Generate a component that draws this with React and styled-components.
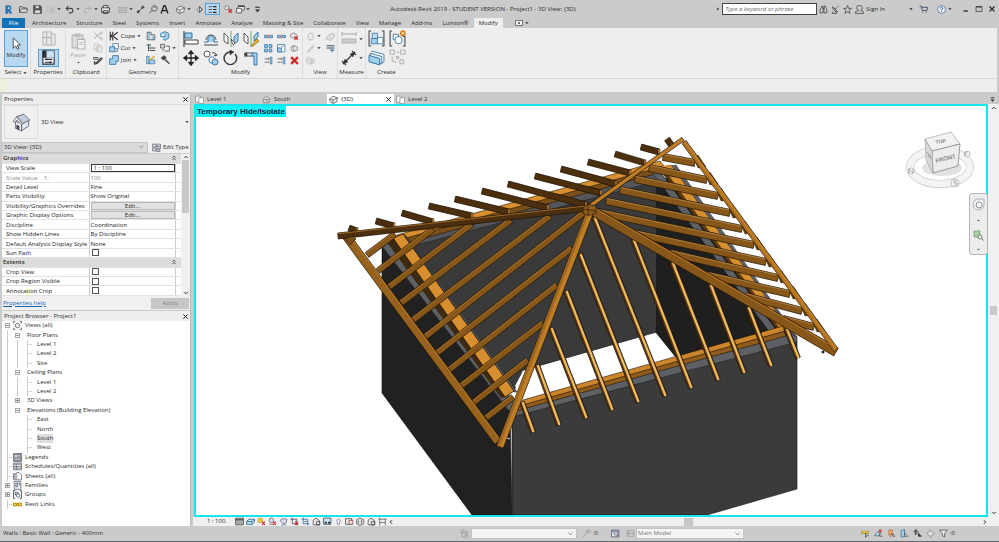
import { Fragment } from 'react';
import styled, { createGlobalStyle } from 'styled-components';

const GlobalStyle = createGlobalStyle`
  * {
    box-sizing: border-box;
  }

  body {
    margin: 0;
    background: #cbcbcb;
  }

  body, button, input, select, table {
    font-family: "Open Sans", "Noto Sans", sans-serif;
    font-size: 6px;
    line-height: 9px;
    color: #2b2b2b;
  }
`;

// ---------- icons ----------

const D = '#444';
const B = '#2f6f9f';
const L = '#9fd0ee';
const G = '#b4b4b4';
const R = '#d02828';
const O = '#e0a020';

// every entry is [path, stroke, fill, stroke width] on a 16x16 grid
const glyphs = {
  revit: [['M3 1h6a4.500 4.500 0 0 1 2 8l3 6h-4l-3-5.500V15H3z', '#1c62a8', '#2474bd', 0.6], ['M7 4v3h2a1.500 1.500 0 0 0 0-3z', '#fff', '#cbcbcb', 0.3]],
  open: [['M1 13V3h5l1 2h6v2M1 13l3-6h12l-3 6z', D, '#ddd', 1.4]],
  save: [['M1 1h12l2 2v12H1z', '#333', '#555', 1], ['M4 1h7v5H4zM3 9h10v6H3z', '#444', '#ddd', 1]],
  sync: [['M2 4l6-3 6 3v6l-6 4-6-4zM2 4l6 3 6-3M8 7v7', G, '#ccc', 1.2], ['M9 11a3 3 0 1 1 1 3', G, 'none', 1.4]],
  undo: [['M6 2L2 6l4 4M2 6h8a4 4 0 0 1 0 8H7', D, 'none', 1.8]],
  redo: [['M10 2l4 4-4 4M14 6H6a4 4 0 0 0 0 8h3', G, 'none', 1.8]],
  print: [['M4 5V1h8v4M1 5h14v8H1zM4 10h8v5H4z', '#333', '#eee', 1.5]],
  ruler: [['M1 4v3M15 4v3M1 5h14M1 9h14v4H1z', '#999', 'none', 1.4]],
  dim: [['M2 14L14 2M1 11l4 4M11 1l4 4', '#333', 'none', 1.2], ['M2 14l2-5 3 3zM14 2l-2 5-3-3z', '#333', '#333', 0.4]],
  tag: [['M1 15L6 9M5 4a5 5 0 1 1 4 7l-4-2zM8 4h4', D, 'none', 1.3]],
  textA: [['M2 15L7 1h2l5 14M4 10h8', '#222', 'none', 2.4]],
  house: [['M1 7l6-5 8 3-1 7-7 3-5-3z', D, '#eee', 1.2], ['M1 7l6 2 8-4M7 9v6', D, 'none', 1.2]],
  section: [['M4 8l4-5 5 5-5 5zM8 3v10l5-5z', D, '#eee', 1.2]],
  thin: [['M1 3h6M1 8h6M1 13h6', '#222', 'none', 1.2], ['M9 3h6M9 13h6', '#222', 'none', 2.4], ['M9 8h6', '#222', 'none', 1.8]],
  closeHidden: [['M2 2h6v6H2zM8 7h5', '#777', '#eee', 1.3], ['M8 8l6 6M14 8l-6 6', R, 'none', 2.2]],
  switchWin: [['M4 1h11v8H4z', D, '#eee', 1.3], ['M4 2.500h11', D, 'none', 2], ['M1 6h9v8H1z', D, '#eee', 1.3]],
  customise: [['M4 4h8', '#333', 'none', 2], ['M4 8h8l-4 5z', '#333', '#333', 0.5]],
  binoculars: [['M2 14V9l3-7h2v12zM14 14V9l-3-7H9v12zM7 6h2', '#333', '#ddd', 1.4]],
  satellite: [['M3 3c0 5 3 9 9 9zM7 8l4-4M3 12l-1 3h8l-2-3M12 1l2 2', '#333', 'none', 1.3]],
  star: [['M8 1l2 5h5l-4 3.500 1.500 5.500L8 12l-4.500 3L5 9.500 1 6h5z', '#333', 'none', 1.2]],
  user: [['M8 1a4 4 0 0 1 2 8v1l5 2v3H1v-3l5-2V9a4 4 0 0 1 2-8z', '#333', 'none', 1.2]],
  cart: [['M1 2h3l2 8h8l1-6H4', '#2d3763', 'none', 1.4], ['M6 13h1M12 13h1', '#2d3763', 'none', 2]],
  help: [['M8 1a7 7 0 1 1 0 14A7 7 0 0 1 8 1z', '#2d5e8a', '#eef4fa', 1.2], ['M6 6a2 2 0 1 1 2.500 2L8 9.500M8 11v1.500', '#2456a0', 'none', 1.6]],
  minimise: [['M3 12h9', '#222', 'none', 2.4]],
  maximise: [['M2 3h12v10H2z', '#333', 'none', 1.4], ['M2 4h12', '#333', 'none', 2]],
  close: [['M3 3l10 10M13 3L3 13', '#222', 'none', 2.2]],
  camera: [['M1 3h14v10H1z', D, '#f5f5f5', 1.4], ['M6 8h4', D, 'none', 3]],
  cursor: [['M4 1l9 9H9l2 4-2 1-2-4-3 3z', '#333', '#fff', 1]],
  family: [['M2 1h9v6H2zM2 7h9v8H2zM11 3h4v12h-4M6 1v14', G, '#e6e6e6', 1]],
  properties: [['M2 1h12v14H2z', '#263238', '#fff', 1.2], ['M2 1h4v7H2z', '#222', '#333', 0.6], ['M6 1h8v7H6z', '#78a', '#cfe4f4', 0.6], ['M4 10h8M4 13h8M6 9v2M10 12v2', '#222', 'none', 1.2]],
  paste: [['M2 2h10v12H2z', G, '#dcdcdc', 1], ['M5 1h4v2H5z', G, '#ccc', 1], ['M7 6h7v9H7z', G, '#f2f2f2', 1], ['M8.500 9h4M8.500 11h4', G, 'none', 0.8]],
  scissors: [['M2 3l10 9M2 12l10-9', '#aaa', 'none', 1.6], ['M12 11a2 2 0 1 1 0 3zM12 2a2 2 0 1 1 0 3z', '#aaa', 'none', 1]],
  copyDoc: [['M2 2h7v9H2zM6 5h8v9H6z', G, '#eee', 1.1]],
  brush: [['M1 4h7v3H1z', '#333', '#eee', 1.2], ['M4 13l9-9 2 2-8 8z', '#222', '#555', 1], ['M2 10l4 4-4 1z', '#222', '#777', 1]],
  cope: [['M2 1v14M6 1v4l-3 3 3 3v4M14 2L6 8l8 6', '#333', 'none', 1.8]],
  cut: [['M6 1h9v8H9V6H6z', B, '#fff', 1.2], ['M1 6h8v8H1z', B, L, 1.2], ['M10 14a4 4 0 0 0 4-4', D, 'none', 1.2]],
  join: [['M6 1h9v9h-4v5H1V6h5z', B, L, 1.3]],
  wallA: [['M2 2h6v4h6v8H2z', D, '#dfeaf2', 1.2], ['M5 2v12M9 8l4 3-4 3', B, 'none', 1]],
  wallB: [['M1 4l7-3 6 3v7l-6 4-3-2M1 4v5h7V5', B, L, 1.3]],
  beam: [['M1 3h7M4 3v10M6 8h9M6 12h9', '#333', 'none', 1.4], ['M8 5l-3 3 3 2', B, L, 1]],
  splitFace: [['M1 2h6v6H1z', D, '#ddd', 1.2], ['M9 5h6v8H7', D, '#eee', 1.2], ['M4 11h2', D, 'none', 2]],
  paint: [['M1 2h4v12H1zM5 8h9v6H5z', B, L, 1], ['M5 9l9-7', O, 'none', 2.4]],
  hammer: [['M2 5l4-4 4 3-4 4z', '#222', '#444', 1], ['M8 7l7 7', '#555', 'none', 2.4]],
  align: [['M1 0v16', D, 'none', 1.2], ['M2 2h7v5H2z', B, L, 1], ['M2 9h13v4H2z', D, '#fff', 1]],
  offset: [['M1 11h4V9a3.200 3.200 0 1 1 6 0v2h4', B, L, 1], ['M1 14h14', D, 'none', 1], ['M3 9a5 5 0 1 1 10 0', D, 'none', 0.9]],
  mirrorAxis: [['M1 2l4 4v7l-4-3z', D, '#fff', 0.9], ['M8 0v16', '#3d9a4a', 'none', 0.8], ['M15 2l-4 4v7l4-3z', B, L, 0.9], ['M8 8l4 4-2 2z', '#333', '#fff', 0.7]],
  mirrorDraw: [['M1 2l4 4v7l-4-3z', D, '#fff', 0.9], ['M8 0v16', '#3d9a4a', 'none', 0.8], ['M15 1l-4 4v5l4-4z', B, L, 0.9], ['M8 15l6-7 2 2-6 5z', '#8a6a10', '#f0c030', 0.8]],
  move: [['M8 1v14M1 8h14', '#222', 'none', 1.3], ['M8 0l3 4H5zM8 16l3-4H5zM0 8l4-3v6zM16 8l-4-3v6z', '#222', '#222', 0.3]],
  copy: [['M4 1a3 3 0 1 1 0 6a3 3 0 0 1 0-6z', D, '#fff', 0.9], ['M8 7a3.200 3.200 0 1 1 0 6a3.200 3.200 0 0 1 0-6z', B, '#fff', 0.9], ['M12 9a3 3 0 1 1 0 6a3 3 0 0 1 0-6z', B, L, 0.9], ['M9 3c3-1 4 0 4 3l-2-1M13 6l1-2', '#333', 'none', 0.9]],
  rotate: [['M12 4a6.300 6.300 0 1 1-4-2', '#333', 'none', 1.4], ['M7 0l4 2-4 3z', '#333', '#333', 0.5]],
  trim: [['M1 3h10M1 6h9', D, 'none', 0.9], ['M9 3h5v12h-3V6H9z', B, L, 0.9], ['M1 4.500l3-2v4z', '#333', '#333', 0.4]],
  split: [['M1 6h5v4H1zM10 6h5v4h-5z', B, L, 1.4], ['M8 4v8', '#c44', 'none', 1]],
  array: [['M1 1h5v5H1zM9 1h5v5H9zM1 9h5v5H1zM9 9h5v5H9z', B, L, 1.4]],
  scale: [['M1 1h13v13H1z', B, '#fff', 1.3], ['M1 7h7v7H1z', B, L, 1.3], ['M8 6l4-3', D, 'none', 1.3]],
  extend: [['M1 5h8M1 11h8M7 3l2 2-2 2', D, 'none', 1.2], ['M11 2h3v12h-3z', B, L, 1.2]],
  pin: [['M2 5h3V3h4v2h4v6H9v2H5v-2H2zM6 4v8', '#777', '#eee', 1.2]],
  unpin: [['M1 4h3V2h4v2h4v5H8v2H4V9H1z', '#777', '#eee', 1.2], ['M8 8l6 6M14 8l-6 6', R, 'none', 2.2]],
  remove: [['M2 2l12 12M14 2L2 14', R, 'none', 4]],
  bulb: [['M5 11a5 5 0 1 1 6 0v3H5z', G, '#e8e8e8', 1.4]],
  pencil: [['M2 14l10-11 2 2L5 14z', G, '#ddd', 1.4]],
  eraser: [['M1 9l8-7 6 2v5l-7 6-7-2z', G, '#ddd', 1.3]],
  lineStyle: [['M1 3h14M1 7h14', '#3a4a5a', 'none', 2], ['M7 11h8M11 9v6', B, 'none', 1.6]],
  linework: [['M1 4l5-2 4 3v8l-5 2-4-4zM6 8l8-3v7l-5 2', G, '#e0e0e0', 1.2]],
  measure: [['M1 1v4M15 1v4M1 3h14', '#aaa', 'none', 1], ['M1 8h14v4H1z', '#b4b4b4', '#ccc', 1]],
  assembly: [['M3 1H1v14h2M13 1h2v14h-2', D, 'none', 1], ['M4 3h5v5H4z', B, '#b8dcf2', 0.7], ['M3 8h6v5H3z', B, L, 0.7], ['M9 7h5v6H9z', B, '#fff', 0.7]],
  group: [['M3 1H1v14h2M13 6h2v9h-2', D, 'none', 1], ['M4 4h5v5H4z', B, '#fff', 0.8], ['M9 6a3.500 3.500 0 1 1 0 7a3.500 3.500 0 0 1 0-7z', B, '#fff', 0.8], ['M13 1a2 2 0 1 1 0 4a2 2 0 0 1 0-4z', '#e07818', '#fbe0b8', 1.4]],
  parts: [['M3 2l12 3v7l-2 1', B, '#fff', 0.8], ['M2 4l11 3v7L2 11z', B, '#e6f2fa', 0.8], ['M1 6l10 3v6L1 12z', B, L, 0.9]],
  similar: [['M1 1h4v4H1zM11 1h4v4h-4zM7 3h3M3 7v4l4 2', G, 'none', 1], ['M7 7h2v2H7zM12 10a2 2 0 1 1 0 4a2 2 0 0 1 0-4z', G, 'none', 1]],
  homeBig: [['M3 7l5 2v6l-5-2z', '#445', '#f8fafb', 0.6], ['M8 9l6-3v5l-6 4z', '#445', '#dfe5ec', 0.6], ['M1 7l3-4 5 6-1 1-4-4-2 2z', '#445', '#eef2f6', 0.6], ['M4 3l6-2 5 5-6 3z', '#445', '#c2cedc', 0.6], ['M4 10l2 1v3l-2-1z', '#334', '#445', 0.4]],
  editType: [['M1 2h6v5H1zM1 9h6v5H1zM9 2h6v8H9z', '#556', '#dde6f0', 1.2], ['M8 6h7M8 12h6v3H8z', '#556', 'none', 1.2]],
  plan: [['M1 2h9v11H1z', '#888', '#f4f4f4', 1.2], ['M7 5h8v10H7z', '#888', '#fff', 1.2]],
  elevation: [['M1 8l7-6 7 6M3 8h10v6H3zM7 10h2v4', '#777', '#ddd', 1.3]],
  views: [['M1 4V1h3M12 1h3v3M15 12v3h-3M4 15H1v-3', D, 'none', 1.4], ['M8 4a4 4 0 1 1 0 8a4 4 0 0 1 0-8z', D, '#eee', 1.2]],
  legend: [['M1 1h14v14H1z', '#4a5058', '#8a929c', 1.2], ['M3 4h4v3H3zM9 5h4M3 11h10', '#fff', 'none', 1]],
  schedule: [['M1 2h14v12H1z', '#4a5058', '#dfe5ec', 1.2], ['M1 4h14M1 8h14M1 11h14M6 4v10', '#4a5058', 'none', 1]],
  sheet: [['M1 3h11v11H1z', '#4a5058', '#dfe5ec', 1.2], ['M6 1h5l4 4v9h-4', '#4a5058', '#fff', 1.2], ['M1 5h6M1 8h6M1 11h6', '#4a5058', 'none', 1]],
  families: [['M2 1h12v14H2z', '#556', '#e8edf2', 1.2], ['M5 4h3v6H5zM10 4h2v4', '#345', 'none', 1.2]],
  groups: [['M4 1H1v14h3M12 1h3v14h-3', '#345', 'none', 1.5], ['M4 4h5v5H4z', '#345', '#c8d8e8', 1.2], ['M9 7a3 3 0 1 1 0 6a3 3 0 0 1 0-6z', '#345', '#fff', 1.2]],
  link: [['M1 6h6v4H1zM9 6h6v4H9zM5 8h6', '#c79a12', '#f4dc7a', 2.2]],
  detail: [['M1 2h14v12H1z', '#555', '#aaa', 1.4], ['M1 5h14', '#333', 'none', 1.6]],
  visual: [['M1 8l4-4h10l-4 4zM1 8v5h10V8M11 13l4-4V4', B, '#bfe0f0', 1.5]],
  sun: [['M6 2a4 4 0 1 1 0 8a4 4 0 0 1 0-8z', '#b8860b', '#f8cc40', 1.2], ['M9 8l5 6M14 8l-5 6', R, 'none', 2]],
  shadow: [['M6 2a4 4 0 1 1 0 8a4 4 0 0 1 0-8zM2 13h7', '#567', '#dde', 1.3], ['M9 8l5 6M14 8l-5 6', R, 'none', 2]],
  render: [['M2 6l4-3 8 1-1 6-6 2zM4 14h9', '#567', '#dde', 1.3]],
  crop: [['M4 1v11h11M1 4h11v11', '#446', 'none', 1.4], ['M9 8l5 6M14 8l-5 6', R, 'none', 2]],
  cropShow: [['M4 1v11h11M1 4h11v11M6 8h5', B, '#dde', 1.4]],
  lock: [['M2 6l5-4 6 4v8H2zM8 8h6v6H8z', '#444', '#e8e8e8', 1.3]],
  glasses: [['M1 2h13v11H1z', '#346', '#cfe6f6', 1.4], ['M3 10h4M9 10h4', '#222', 'none', 3]],
  smallBulb: [['M6 9a3 3 0 1 1 4 0v4H6z', '#568', '#eef', 1]],
  worksharing: [['M1 3h11v10H1z', '#444', '#eee', 1.4], ['M7 6h7v7H7z', '#833', '#f4dede', 1.2]],
  analytic: [['M1 12V5l6-3 7 3v7l-7 3zM4 6v6M10 5v7', '#555', '#ddd', 1.3]],
  constraint: [['M3 1v14M13 3v12M1 4h14M3 10h10', '#555', 'none', 1.3]],
  workset: [['M2 2h5v4H2zM9 5h5v3H9zM4 6v8h4M9 11h5v4H9z', '#888', '#ddd', 1.2]],
  edit: [['M2 14L12 2M9 2h5v4H8z', '#999', '#ddd', 1.5]],
  option: [['M1 2h13v12H1z', '#446', '#e4ecf4', 1.3], ['M1 4h13M4 7h3v5M9 7h3v5H9', '#446', 'none', 1.3]],
  optionB: [['M2 3h12v10H2zM5 3v10M2 8h12', '#999', '#ccc', 1.2]],
  selLink: [['M1 4h12v4H1z', '#9a7a10', '#f0d040', 1], ['M8 7l5 5H9l-1 3z', '#222', '#fff', 1]],
  selUnder: [['M1 12l5-7h6l-3 7z', '#457', '#cde', 1.2], ['M9 1l5 5M14 1L9 6', R, 'none', 1.8], ['M9 8l5 5h-4z', '#222', '#fff', 1]],
  selPin: [['M3 2h7l-1 4 3 4H2l2-4zM6 10v5', '#b06020', '#f0b080', 1.2], ['M9 8l5 5h-4z', '#222', '#fff', 1]],
  selFace: [['M2 3l6-2v13H2z', B, L, 1.3], ['M8 7l6 6h-5z', '#222', '#fff', 1]],
  dragSel: [['M5 1v9M1 5h9M3 3l2-2 2 2M3 8l2 2 2-2', '#222', 'none', 1.4], ['M9 7l6 6h-5z', '#222', '#333', 1]],
  gear: [['M8 3a5 5 0 1 1 0 10A5 5 0 0 1 8 3zM8 1v2M8 13v2M1 8h2M13 8h2', '#999', '#ddd', 1.6]],
  filter: [['M1 2h14l-5 6v6l-4-2V8z', '#444', '#eee', 1.3]],
  arrowUp: [['M3 11l5-5 5 5', '#333', 'none', 2.6]],
  arrowDown: [['M3 5l5 5 5-5', '#333', 'none', 2.6]],
  arrowLeft: [['M11 3L6 8l5 5', '#333', 'none', 2.6]],
  arrowRight: [['M5 3l5 5-5 5', '#333', 'none', 2.6]],
  fold: [['M4 7l4-4 4 4M4 13l4-4 4 4', '#222', 'none', 2]],
  caret: [['M2 5h12l-6 7z', '#333', '#333', 0.5]],
  caretRight: [['M5 2v12l7-6z', '#333', '#333', 0.5]],
};

const Svg = styled.svg`
  display: block;
  flex: none;
  width: ${({ $size }) => $size}px;
  height: ${({ $size }) => $size}px;
`;

const Icon = ({ name, size = 10 }) => (
  <Svg viewBox="0 0 16 16" $size={size} aria-hidden="true">
    {glyphs[name].map(([d, stroke, fill, width]) => (
      <path key={d} d={d} stroke={stroke} fill={fill} strokeWidth={width} />
    ))}
  </Svg>
);

const IconButton = styled.button`
  display: flex;
  flex: none;
  align-items: center;
  justify-content: center;
  gap: 2px;
  width: ${({ $w }) => ($w ? `${$w}px` : 'auto')};
  height: ${({ $h }) => $h || 12}px;
  margin: 0;
  margin-left: ${({ $gap }) => $gap || 0}px;
  padding: 0;
  border: 1px solid ${({ $on }) => ($on ? '#5c9fd4' : 'transparent')};
  background: ${({ $on }) => ($on ? '#b8d8f0' : 'transparent')};
  color: ${({ $muted }) => ($muted ? '#a8a8a8' : '#2b2b2b')};
`;

const Page = styled.div`
  display: flex;
  flex-direction: column;
  height: 100vh;
  min-height: 520px;
  overflow: hidden;
`;

// ---------- title bar ----------

const TitleBar = styled.header`
  display: grid;
  grid-template-columns: 39% auto 1fr;
  align-items: center;
  height: 18px;
  padding: 0 3px;
`;

const BarGroup = styled.div`
  display: flex;
  align-items: center;
  justify-content: ${({ $end }) => ($end ? 'flex-end' : 'flex-start')};
`;

const AppTitle = styled.div`
  white-space: nowrap;
`;

const SearchBox = styled.input`
  width: 95px;
  height: 12px;
  margin: 0 1px 0 2px;
  padding: 0 2px;
  border: 1px solid #444;
  border-radius: 0;
  background: #fff;

  &::placeholder {
    color: #666;
    font-style: italic;
  }
`;

const quickAccess = [
  ['revit', 'Revit', 11, 0],
  ['open', 'Open', 11, 4],
  ['save', 'Save', 10, 3],
  ['sync', 'Synchronize', 10, 3],
  ['caret', 'Synchronize options', 6, 1],
  ['undo', 'Undo', 10, 2],
  ['caret', 'Undo list', 6, 1],
  ['redo', 'Redo', 10, 1],
  ['caret', 'Redo list', 6, 1],
  ['print', 'Print', 11, 1],
  ['ruler', 'Measure', 10, 6],
  ['caret', 'Measure options', 6, 1],
  ['dim', 'Aligned Dimension', 11, 1],
  ['tag', 'Tag by Category', 10, 2],
  ['textA', 'Text', 9, 2],
  ['house', 'Default 3D View', 10, 6],
  ['caret', '3D View options', 6, 1],
  ['section', 'Section', 10, 2],
  ['thin', 'Thin Lines', 15, 1],
  ['closeHidden', 'Close Hidden Windows', 10, 3],
  ['switchWin', 'Switch Windows', 10, 2],
  ['caret', 'Windows list', 6, 0],
  ['customise', 'Customize Quick Access Toolbar', 8, 2],
];

const Header = () => (
  <TitleBar>
    <BarGroup>
      {quickAccess.map(([name, label, w, gap]) => (
        <IconButton key={label} aria-label={label} $w={w} $gap={gap} $on={name === 'thin'}>
          <Icon name={name} size={name === 'caret' ? 4 : 9} />
        </IconButton>
      ))}
    </BarGroup>
    <AppTitle>Autodesk Revit 2019 - STUDENT VERSION - Project1 - 3D View: {'{3D}'}</AppTitle>
    <BarGroup $end>
      <Icon name="caretRight" size={4} />
      <SearchBox aria-label="Search" placeholder="Type a keyword or phrase" />
      <IconButton aria-label="Find" $w={10}><Icon name="binoculars" size={9} /></IconButton>
      <IconButton aria-label="Communication" $w={10} $gap={2}><Icon name="satellite" size={9} /></IconButton>
      <IconButton aria-label="Favorites" $w={10} $gap={2}><Icon name="star" size={9} /></IconButton>
      <IconButton $gap={2}><Icon name="user" size={9} />Sign In</IconButton>
      <IconButton aria-label="Account" $w={6} $gap={22}><Icon name="caret" size={4} /></IconButton>
      <IconButton aria-label="Store" $w={10} $gap={4}><Icon name="cart" size={9} /></IconButton>
      <IconButton aria-label="Help" $w={10} $gap={8}><Icon name="help" size={9} /></IconButton>
      <IconButton aria-label="Help options" $w={6} $gap={1}><Icon name="caret" size={4} /></IconButton>
      <IconButton aria-label="Minimize" $w={9} $gap={8}><Icon name="minimise" size={8} /></IconButton>
      <IconButton aria-label="Maximize" $w={9} $gap={4}><Icon name="maximise" size={8} /></IconButton>
      <IconButton aria-label="Close" $w={9} $gap={4}><Icon name="close" size={8} /></IconButton>
    </BarGroup>
  </TitleBar>
);

const Tabs = styled.nav`
  display: flex;
  align-items: stretch;
  height: 10px;
  padding-left: 2px;
`;

const Tab = styled.button`
  padding: 0 5px;
  border: 0;
  line-height: 10px;
  white-space: nowrap;
  background: ${({ $kind }) => ({ file: '#1071b8', active: '#eee' })[$kind] || 'transparent'};
  color: ${({ $kind }) => ($kind === 'file' ? '#fff' : '#2b2b2b')};
  ${({ $kind }) => $kind === 'file' && 'width: 23px; margin-right: 2px;'}
`;

const tabNames = ['File', 'Architecture', 'Structure', 'Steel', 'Systems', 'Insert', 'Annotate', 'Analyze', 'Massing & Site', 'Collaborate', 'View', 'Manage', 'Add-Ins', 'Lumion®', 'Modify'];

const RibbonTabs = () => (
  <Tabs>
    {tabNames.map((name) => (
      <Tab key={name} $kind={{ File: 'file', Modify: 'active' }[name]}>{name}</Tab>
    ))}
    <IconButton aria-label="Ribbon display" $gap={11} $h={10}>
      <Icon name="camera" size={8} />
      <Icon name="caret" size={4} />
    </IconButton>
  </Tabs>
);

// ---------- ribbon ----------

const Ribbon = styled.section`
  display: flex;
  height: 51px;
  margin-right: 2px;
  padding-left: 2px;
  border-bottom: 1px solid #d4d4d4;
  background: #eee;
`;

const PanelBox = styled.div`
  display: flex;
  flex-direction: column;
  width: ${({ $w }) => $w}px;
  border-right: 1px solid ${({ $last }) => ($last ? 'transparent' : '#dcdcdc')};
`;

const PanelBody = styled.div`
  display: flex;
  flex: 1;
  align-items: center;
  justify-content: center;
  gap: ${({ $gap }) => $gap || 0}px;
  padding-top: 1px;
`;

const PanelTitle = styled.div`
  display: flex;
  align-items: center;
  justify-content: center;
  gap: 2px;
  height: 11px;
  white-space: nowrap;
`;

const Stack = styled.div`
  display: flex;
  flex-direction: column;
  align-items: ${({ $start }) => ($start ? 'flex-start' : 'center')};
  gap: ${({ $gap }) => $gap || 0}px;
`;

const LargeButton = styled(IconButton)`
  flex-direction: column;
  gap: 1px;
  width: ${({ $w }) => $w || 22}px;
  height: 37px;
`;

const IconGrid = styled.div`
  display: grid;
  grid-template-columns: repeat(${({ $cols }) => $cols}, auto);
  gap: ${({ $gap }) => $gap};
  justify-items: start;
`;

const Panel = ({ title, width, gap, menu, last, children }) => (
  <PanelBox $w={width} $last={last}>
    <PanelBody $gap={gap}>{children}</PanelBody>
    <PanelTitle>
      {title}
      {menu && <Icon name="caret" size={4} />}
    </PanelTitle>
  </PanelBox>
);

const Tools = ({ cols, gap, size, height, names }) => (
  <IconGrid $cols={cols} $gap={gap}>
    {names.map((name) => {
      const [icon, menu] = name.split('+');
      return (
        <IconButton key={name} aria-label={icon} $h={height || 12}>
          <Icon name={icon} size={size} />
          {menu !== undefined && <Icon name="caret" size={4} />}
        </IconButton>
      );
    })}
  </IconGrid>
);

const RibbonBar = () => (
  <Ribbon>
    <Panel title="Select" width={29} menu>
      <LargeButton $on $w={24}>
        <Icon name="cursor" size={13} />
        Modify
      </LargeButton>
    </Panel>
    <Panel title="Properties" width={35}>
      <Stack $gap={1}>
        <IconButton aria-label="Family Types" $w={20} $h={18} $muted><Icon name="family" size={15} /></IconButton>
        <IconButton aria-label="Properties" $w={21} $h={18} $on><Icon name="properties" size={15} /></IconButton>
      </Stack>
    </Panel>
    <Panel title="Clipboard" width={41} gap={4}>
      <LargeButton $muted $w={19}>
        <Icon name="paste" size={17} />
        Paste
        <Icon name="caret" size={3} />
      </LargeButton>
      <Tools cols={1} gap="0px" size={10} names={['scissors', 'copyDoc', 'brush']} />
    </Panel>
    <Panel title="Geometry" width={72} gap={3}>
      <Stack $start>
        {[['cope', 'Cope'], ['cut', 'Cut'], ['join', 'Join']].map(([icon, label]) => (
          <IconButton key={label}>
            <Icon name={icon} size={10} />
            {label}
            <Icon name="caret" size={4} />
          </IconButton>
        ))}
      </Stack>
      <Tools cols={2} gap="0px 2px" size={10} names={['wallA', 'wallB', 'beam', 'splitFace+', 'paint', 'hammer']} />
    </Panel>
    <Panel title="Modify" width={124} gap={3}>
      <Tools cols={4} gap="1px 2px" size={16} height={18} names={['align', 'offset', 'mirrorAxis', 'mirrorDraw', 'move', 'copy', 'rotate', 'trim']} />
      <IconGrid $cols={3} $gap="0px 2px">
        {['split', 'split', 'unpin', 'array', 'scale', 'pin', 'extend', 'extend', 'remove'].map((name, i) => (
          <IconButton key={i} aria-label={`${name} ${i + 1}`}>
            <Icon name={name} size={9} />
          </IconButton>
        ))}
      </IconGrid>
    </Panel>
    <Panel title="View" width={35}>
      <Tools cols={2} gap="0px 3px" size={9} names={['bulb+', 'eraser', 'pencil+', 'lineStyle', 'linework']} />
    </Panel>
    <Panel title="Measure" width={28}>
      <Tools cols={1} gap="2px" size={16} height={17} names={['measure+', 'dim+']} />
    </Panel>
    <Panel title="Create" width={42} last>
      <Tools cols={2} gap="1px 2px" size={17} height={18} names={['assembly', 'group', 'parts', 'similar']} />
    </Panel>
  </Ribbon>
);

const OptionsBar = styled.div`
  height: 13px;
  margin-right: 2px;
  border-left: 8px solid #eef0dc;
  background: #eee;
`;

// ---------- properties palette ----------

const Workspace = styled.main`
  display: grid;
  grid-template-columns: 191px 1fr;
  flex: 1;
  gap: 2px;
  min-height: 0;
`;

const Sidebar = styled.aside`
  display: flex;
  flex-direction: column;
  min-height: 0;
  margin: 2px 0 0 2px;
  border-right: 1px solid #bbb;
  background: #f0f0f0;
`;

const PaletteHead = styled.h2`
  display: flex;
  align-items: center;
  justify-content: space-between;
  height: 10px;
  margin: 0;
  padding: 0 0 0 2px;
  background: #eee;
  font-size: 6px;
  font-weight: 400;
`;

const TypeSelector = styled.div`
  display: flex;
  align-items: center;
  gap: 3px;
  height: 37px;
  padding: 0 1px 2px 2px;
  border-top: 1px solid #ddd;
`;

const Thumb = styled.div`
  display: flex;
  align-items: center;
  justify-content: center;
  width: 34px;
  height: 34px;
  border: 1px solid #ddd;
`;

const TypeName = styled.span`
  flex: 1;
`;

const InstanceRow = styled.div`
  display: flex;
  align-items: center;
  gap: 3px;
  height: 12px;
`;

const SelectWrap = styled.span`
  display: flex;
  align-items: center;
  width: ${({ $w }) => $w}px;
  height: ${({ $h }) => $h}px;
  padding-right: 3px;
  border: 1px solid #c4c4c4;
  background: ${({ $bg }) => $bg};

  select {
    flex: 1;
    min-width: 0;
    margin: 0;
    padding: 0 1px;
    border: 0;
    appearance: none;
    background: transparent;
    color: ${({ $muted }) => ($muted ? '#777' : '#2b2b2b')};
  }
`;

const Select = ({ label, value, width, height, bg, muted }) => (
  <SelectWrap $w={width} $h={height} $bg={bg} $muted={muted}>
    <select aria-label={label}>
      <option>{value}</option>
    </select>
    <svg width="5" height="4" viewBox="0 0 5 4" aria-hidden="true">
      <path d="M0.5 0.5l2 2.500 2-2.500" fill="none" stroke="#777" strokeWidth="0.7" />
    </svg>
  </SelectWrap>
);

const TableScroll = styled.div`
  display: flex;
  height: 143px;
  border-top: 1px solid #ccc;
`;

const PropTable = styled.table`
  flex: 1;
  height: 142px;
  border-collapse: collapse;
  table-layout: fixed;
  background: #fff;

  th, td {
    height: 9px;
    padding: 0 0 0 4px;
    border-bottom: 1px solid #e2e2e2;
    font-weight: 400;
    line-height: 8px;
    text-align: left;
    white-space: pre;
  }

  td {
    padding: 0 0 0 1px;
    border-left: 1px solid #ccc;
  }
`;

const SectionRow = styled.tr`
  background: #dcdcdc;

  && th {
    padding: 0 4px 0 1px;
    font-weight: 600;
  }
`;

const SectionLabel = styled.div`
  display: flex;
  align-items: center;
  justify-content: space-between;
`;

const PropRow = styled.tr`
  th, td, td span {
    color: ${({ $muted }) => ($muted ? '#8a8a8a' : '#1c1c1c')};
  }
`;

const ScaleInput = styled.input`
  display: block;
  width: 100%;
  height: 8px;
  padding: 0 2px;
  border: 1px solid #333;
  line-height: 6px;
`;

const EditButton = styled.button`
  display: block;
  width: 100%;
  height: 8px;
  padding: 0;
  border: 1px solid #b8b8b8;
  background: #e1e1e1;
  line-height: 6px;
`;

const Check = styled.input`
  display: block;
  width: 7px;
  height: 7px;
  margin: 0 0 0 1px;
  border: 1px solid #555;
  appearance: none;
  background: #fff;
`;

const VScroll = styled.div`
  display: flex;
  flex-direction: column;
  align-items: center;
  justify-content: space-between;
  width: 9px;
  background: #f0f0f0;
`;

const VThumb = styled.div`
  flex: 0 0 ${({ $h }) => $h}px;
  width: 7px;
  margin-bottom: auto;
  margin-top: ${({ $above }) => $above || '0'};
  background: #c8c8c8;
`;

const PaletteFoot = styled.div`
  display: flex;
  align-items: center;
  justify-content: space-between;
  height: 15px;
  padding: 0 1px;
  border-bottom: 1px solid #c8c8c8;

  a {
    color: #1464b0;
  }

  button {
    width: 38px;
    height: 11px;
    padding: 0;
    border: 0;
    background: #c6c6c6;
    color: #8a8a8a;
  }
`;

const properties = [
  { section: 'Graphics' },
  { name: 'View Scale', input: '1 : 100' },
  { name: 'Scale Value    1:', text: '100', muted: true },
  { name: 'Detail Level', text: 'Fine' },
  { name: 'Parts Visibility', text: 'Show Original' },
  { name: 'Visibility/Graphics Overrides', edit: true },
  { name: 'Graphic Display Options', edit: true },
  { name: 'Discipline', text: 'Coordination' },
  { name: 'Show Hidden Lines', text: 'By Discipline' },
  { name: 'Default Analysis Display Style', text: 'None' },
  { name: 'Sun Path', check: true },
  { section: 'Extents' },
  { name: 'Crop View', check: true },
  { name: 'Crop Region Visible', check: true },
  { name: 'Annotation Crop', check: true },
];

const PropValue = ({ row }) => {
  if (row.input) return <ScaleInput aria-label={row.name} defaultValue={row.input} />;
  if (row.edit) return <EditButton aria-label={`Edit... ${row.name}`}>Edit...</EditButton>;
  if (row.check) return <Check type="checkbox" aria-label={row.name} />;
  return <span>{row.text}</span>;
};

const Properties = () => (
  <>
    <PaletteHead>
      Properties
      <IconButton aria-label="Close Properties" $w={9} $h={9}><Icon name="close" size={7} /></IconButton>
    </PaletteHead>
    <TypeSelector>
      <Thumb><Icon name="homeBig" size={19} /></Thumb>
      <TypeName>3D View</TypeName>
      <Icon name="caret" size={4} />
    </TypeSelector>
    <InstanceRow>
      <Select label="Instance" value="3D View: {3D}" width={146} height={11} bg="#dadada" />
      <IconButton><Icon name="editType" size={9} />Edit Type</IconButton>
    </InstanceRow>
    <TableScroll>
      <PropTable>
        <colgroup>
          <col width="87" />
          <col />
          <col width="6" />
        </colgroup>
        <tbody>
          {properties.map((row) => (row.section ? (
            <SectionRow key={row.section}>
              <th colSpan={3}>
                <SectionLabel>{row.section}<Icon name="fold" size={6} /></SectionLabel>
              </th>
            </SectionRow>
          ) : (
            <PropRow key={row.name} $muted={row.muted}>
              <th scope="row">{row.name}</th>
              <td><PropValue row={row} /></td>
              <td />
            </PropRow>
          )))}
        </tbody>
      </PropTable>
      <VScroll>
        <Icon name="arrowUp" size={6} />
        <VThumb $h={53} />
        <Icon name="arrowDown" size={6} />
      </VScroll>
    </TableScroll>
    <PaletteFoot>
      <a href="#help">Properties help</a>
      <button>Apply</button>
    </PaletteFoot>
  </>
);

// ---------- project browser ----------

const Tree = styled.ul`
  display: grid;
  grid-auto-rows: 1fr;
  height: 188px;
  margin: 0;
  padding: 0;
  list-style: none;
`;

const TreeArea = styled.div`
  flex: 1;
  background: #fff;
`;

const TreeRow = styled.li`
  display: flex;
  align-items: stretch;
`;

const Guide = styled.span`
  display: flex;
  align-items: center;
  width: 10px;
  background: ${({ $line }) => ($line ? 'linear-gradient(90deg, transparent 50%, #ccc 50%, #ccc 60%, transparent 60%)' : 'none')};

  &::after {
    content: "";
    width: 5px;
    margin-left: 5px;
    border-top: ${({ $branch }) => ($branch ? '1px dotted #bbb' : '0')};
  }
`;

const Toggle = styled.button`
  display: flex;
  align-items: center;
  justify-content: center;
  align-self: center;
  width: 5px;
  height: 5px;
  margin: 0 2px 0 3px;
  padding: 0;
  border: 1px solid #a8a8a8;
  background: #fff;
`;

const Label = styled.span`
  align-self: center;
  margin-left: ${({ $icon }) => ($icon ? 3 : 5)}px;
  line-height: 9px;
  white-space: nowrap;
  background: ${({ $selected }) => ($selected ? '#dedede' : 'transparent')};
`;

const TreeIcon = styled.span`
  display: flex;
  align-items: center;
  margin-left: 1px;
`;

const nodes = [
  { label: 'Views (all)', depth: 0, toggle: '-', icon: 'views' },
  { label: 'Floor Plans', depth: 1, toggle: '-' },
  { label: 'Level 1', depth: 2 },
  { label: 'Level 2', depth: 2 },
  { label: 'Site', depth: 2 },
  { label: 'Ceiling Plans', depth: 1, toggle: '-' },
  { label: 'Level 1', depth: 2 },
  { label: 'Level 2', depth: 2 },
  { label: '3D Views', depth: 1, toggle: '+' },
  { label: 'Elevations (Building Elevation)', depth: 1, toggle: '-' },
  { label: 'East', depth: 2, last: true },
  { label: 'North', depth: 2, last: true },
  { label: 'South', depth: 2, last: true, selected: true },
  { label: 'West', depth: 2, last: true },
  { label: 'Legends', depth: 0, icon: 'legend' },
  { label: 'Schedules/Quantities (all)', depth: 0, icon: 'schedule' },
  { label: 'Sheets (all)', depth: 0, icon: 'sheet' },
  { label: 'Families', depth: 0, toggle: '+', icon: 'families' },
  { label: 'Groups', depth: 0, toggle: '+', icon: 'groups' },
  { label: 'Revit Links', depth: 0, icon: 'link' },
];

const Browser = () => (
  <>
    <PaletteHead>
      Project Browser - Project1
      <IconButton aria-label="Close Project Browser" $w={9} $h={9}><Icon name="close" size={7} /></IconButton>
    </PaletteHead>
    <TreeArea>
      <Tree>
        {nodes.map((node, i) => (
          <TreeRow key={i}>
            {node.depth > 0 && <Guide $line />}
            {node.depth > 1 && <Guide $line={!node.last} />}
            {node.toggle ? (
              <Toggle aria-label={`Toggle ${node.label}`}>
                <svg width="3" height="3" viewBox="0 0 3 3" aria-hidden="true">
                  <path d={node.toggle === '+' ? 'M0 1.500h3M1.500 0v3' : 'M0 1.500h3'} stroke="#777" strokeWidth="0.8" />
                </svg>
              </Toggle>
            ) : <Guide $line $branch />}
            {node.icon && <TreeIcon><Icon name={node.icon} size={9} /></TreeIcon>}
            <Label $icon={node.icon} $selected={node.selected}>{node.label}</Label>
          </TreeRow>
        ))}
      </Tree>
    </TreeArea>
  </>
);

// ---------- model ----------

const WOOD = '#87571a';
const DARK = '#4b2f0e';
const LIGHT = '#bf7d26';
const LINE = '#1d1206';

const backRafters = [
  [349, 228, 357, 231], [376, 221, 394, 226], [402, 213, 433, 222], [429, 206, 472, 216],
  [455, 199, 509, 212], [482, 191, 548, 208], [508, 184, 586, 205], [535, 176, 601, 193],
  [561, 169, 616, 184], [588, 162, 630, 173], [615, 154, 645, 163], [641, 147, 659, 152],
  [667, 139, 672, 146],
];

const leftRafters = [
  [367, 255, 395, 234], [378, 271, 433, 229], [389, 287, 472, 224], [401, 303, 511, 220],
  [413, 320, 550, 216], [425, 337, 586, 211], [437, 353, 572, 248], [449, 370, 557, 285],
  [461, 386, 543, 323], [473, 403, 528, 360], [486, 418, 513, 397],
];

const rightRafters = [
  [663, 157, 695, 163], [649, 168, 707, 180], [635, 179, 718, 196], [620, 190, 730, 213],
  [606, 201, 742, 229], [597, 212, 754, 245], [633, 233, 766, 262], [670, 253, 778, 278],
  [707, 275, 790, 294], [745, 296, 802, 311], [783, 319, 814, 327],
];

const frontRafters = [
  [522, 402, 533, 432], [537, 365, 559, 425], [551, 328, 586, 418], [566, 291, 612, 410],
  [580, 254, 638, 402], [594, 217, 665, 396], [633, 239, 691, 388], [672, 262, 718, 380],
  [710, 284, 744, 373], [748, 307, 771, 366], [786, 328, 798, 358],
];

const Beam = ({ at: [x1, y1, x2, y2], width, face, edge, shade }) => {
  const len = Math.hypot(x2 - x1, y2 - y1);
  const nx = (-(y2 - y1) / len) * (width / 2);
  const ny = ((x2 - x1) / len) * (width / 2);
  const ends = (k) => ({ x1: x1 + nx * k, y1: y1 + ny * k, x2: x2 + nx * k, y2: y2 + ny * k });
  return (
    <g>
      <polygon
        points={`${x1 + nx},${y1 + ny} ${x2 + nx},${y2 + ny} ${x2 - nx},${y2 - ny} ${x1 - nx},${y1 - ny}`}
        fill={face}
        stroke={LINE}
        strokeWidth="0.7"
      />
      {shade && <line {...ends(0.55)} stroke={shade} strokeWidth={width * 0.35} />}
      {edge && <line {...ends(-0.75)} stroke={edge} strokeWidth="0.9" />}
    </g>
  );
};

const ModelSvg = styled.svg`
  display: block;
  width: 100%;
  height: 100%;
`;

const Model = () => (
  <ModelSvg viewBox="196 106 790 409" role="img" aria-label="Hip roof framing over four walls">
    {/* walls */}
    <polygon points="382,246 510,410 512,515 472,515 382,393" fill="#212121" stroke="#111" strokeWidth="0.6" />
    <polygon points="405,247 656,180 656,333 523,371 514,392" fill="#3a3a3a" />
    <polygon points="656,180 668,178 790,330 785,334 676,358 656,333" fill="#1f1f1f" />
    <polygon points="512,417 797,341 797,489 707,515 512,515" fill="#3b3b3b" stroke="#111" strokeWidth="0.6" />
    <polygon points="515,386 523,371 655,333 676,358 523,401" fill="#fff" />

    {/* back wall top and plate */}
    <polygon points="405,248 400,243 658,172 662,180" fill="#53565b" stroke="#222" strokeWidth="0.6" />
    <polygon points="400,245 397,236 660,163 662,172" fill="#7a4f18" stroke={LINE} strokeWidth="0.6" />
    <polygon points="399,240 397,235 660,161 664,166" fill="#d88f30" stroke={LINE} strokeWidth="0.6" />

    {/* left wall top and plate */}
    <polygon points="382,246 389,240 514,402 509,411" fill="#5d6166" stroke="#222" strokeWidth="0.6" />
    <polygon points="386,241 394,236 506,397 501,398" fill="#3d2a12" />
    <polygon points="404,234 407,237 517,392 514,392" fill="#5d6166" stroke="#222" strokeWidth="0.5" />
    <polygon points="393,238 403,234 514,391 505,397" fill="#d88f30" stroke={LINE} strokeWidth="0.8" />

    {/* right wall top and plate */}
    <polygon points="652,172 659,170 779,334 771,334" fill="#5d6166" stroke="#222" strokeWidth="0.5" />
    <polygon points="670,166 676,165 797,337 788,333" fill="#5d6166" stroke="#222" strokeWidth="0.5" />
    <polygon points="659,168 671,165 789,330 779,332" fill="#5c3a10" stroke={LINE} strokeWidth="0.6" />
    <polygon points="662,166 671,165 789,330 781,330" fill="#d88f30" />

    {/* front wall top and plate */}
    <polygon points="512,417 515,409 790,333 797,337 797,342" fill="#5d6166" stroke="#222" strokeWidth="0.6" />
    <polygon points="516,411 520,405 784,331 786,336" fill="#8f5c1c" stroke={LINE} strokeWidth="0.6" />
    <polygon points="519,406 523,400 783,326 785,331" fill="#cc852a" stroke={LINE} strokeWidth="0.6" />

    {backRafters.map((at) => (
      <Fragment key={at.join()}>
        <Beam at={at} width={6} face={DARK} />
        <rect x={at[2] - 1} y={at[3] - 3} width="2" height="5" fill="#c08038" stroke={LINE} strokeWidth="0.4" />
      </Fragment>
    ))}

    {leftRafters.map((at) => <Beam key={at.join()} at={at} width={6} face={WOOD} edge="#a8732c" />)}
    {rightRafters.map((at) => <Beam key={at.join()} at={at} width={7} face={WOOD} edge="#b08044" />)}
    {rightRafters.map(([, , x, y]) => (
      <polygon key={x} points={`${x - 1},${y - 4} ${x + 3},${y - 8} ${x + 11},${y + 4} ${x + 3},${y + 5}`} fill="#5f3c10" stroke={LINE} strokeWidth="0.4" />
    ))}
    {frontRafters.map((at) => <Beam key={at.join()} at={at} width={5} face="#5a380e" />)}
    {frontRafters.map(([x1, y1, x2, y2]) => (
      <line key={x1} x1={x1 + 0.6} y1={y1} x2={x2 + 0.6} y2={y2} stroke="#eebc68" strokeWidth="2.200" />
    ))}

    {/* eaves, hips and ridge */}
    <Beam at={[346, 236, 498, 442]} width={8} face="#96621d" edge={LIGHT} />
    <Beam at={[338, 236, 588, 208]} width={6} face={DARK} edge="#a86e26" />
    <polygon points="345,239 352,236 356,239 350,245" fill="#7a4f18" stroke={LINE} strokeWidth="0.6" />
    <Beam at={[591, 210, 836, 352]} width={9} face={WOOD} edge={LIGHT} />
    <Beam at={[684, 142, 836, 350]} width={5} face={LIGHT} shade="#a86c1e" />
    <Beam at={[590, 206, 683, 139]} width={4} face={LIGHT} />
    <Beam at={[590, 212, 500, 447]} width={7} face={LIGHT} shade="#9c6720" />
    <polygon points="583,208 588,204 596,206 596,213 588,216 583,213" fill="#8f5c1c" stroke={LINE} strokeWidth="0.6" />
    <path d="M588 202v13M583 209l13 2" stroke={LINE} strokeWidth="0.6" />
    <circle cx="823" cy="352" r="1.500" fill="#222" />
    <path d="M507 438l3 1" stroke="#ddd" strokeWidth="1" />
  </ModelSvg>
);

// ---------- drawing area ----------

const DrawingArea = styled.section`
  display: flex;
  flex-direction: column;
  min-width: 0;
  min-height: 0;
  margin-top: 2px;
`;

const DocTabs = styled.div`
  display: flex;
  height: 10px;
  padding-right: 2px;
`;

const DocTab = styled.button`
  display: flex;
  align-items: center;
  gap: 3px;
  width: 67px;
  padding: 0 2px;
  border: 0;
  background: ${({ $active }) => ($active ? '#fff' : '#cbcbcb')};
  text-align: left;

  span {
    flex: 1;
  }
`;

const Spacer = styled.div`
  flex: 1;
`;

const ViewRow = styled.div`
  display: flex;
  flex: 1;
  min-height: 0;
`;

const Viewport = styled.div`
  position: relative;
  flex: 1;
  min-width: 0;
  margin-left: 1px;
  border: 2px solid #18e4ee;
  background: #fff;
`;

const ModeBadge = styled.div`
  position: absolute;
  top: 0;
  left: 0;
  height: 11px;
  padding: 0 1px;
  background: #10f4fa;
  color: #0a1c40;
  font: bold 8px/11px "Liberation Sans", Arial, sans-serif;
`;

const CubeSvg = styled.svg`
  position: absolute;
  top: 20px;
  right: 10px;
  width: 74px;
  height: 66px;
`;

const ViewCube = () => (
  <CubeSvg viewBox="902 126 74 66" role="img" aria-label="View cube">
    <ellipse cx="940" cy="167" rx="30" ry="17" fill="none" stroke="#bdbdbd" strokeWidth="8" />
    <ellipse cx="940" cy="167" rx="30" ry="17" fill="none" stroke="#f4f4f4" strokeWidth="7" />
    <ellipse cx="942" cy="168" rx="20" ry="8" fill="#e2e2e2" />
    <polygon points="925,139 951,132 960,144 932,151" fill="#f2f2f2" stroke="#999" strokeWidth="0.6" />
    <polygon points="932,151 960,144 958,166 933,173" fill="#ececec" stroke="#888" strokeWidth="0.8" />
    <polygon points="925,139 932,151 933,173 926,160" fill="#d8d8d8" stroke="#999" strokeWidth="0.6" />
    <g fontFamily="Liberation Sans, sans-serif" fontWeight="bold" fill="#888">
      <text x="936" y="144" fontSize="5" transform="rotate(-8 936 144)">TOP</text>
      <text x="936" y="163" fontSize="6" transform="rotate(-14 936 163)">FRONT</text>
    </g>
    <g fill="#f4f4f4" stroke="#aaa" strokeWidth="0.7">
      <circle cx="911" cy="171" r="3" />
      <circle cx="955" cy="183" r="4" />
      <circle cx="967" cy="154" r="3" />
    </g>
    <path d="M909 173v-4l4 4v-4M957 181h-3v2h3v2h-3M965 156v-4h3M965 154h2" stroke="#999" strokeWidth="0.7" fill="none" />
    <path d="M927 152l4 5M928 155l3 4" stroke="#888" strokeWidth="0.8" />
  </CubeSvg>
);

const NavBar = styled.div`
  position: absolute;
  top: 87px;
  right: -2px;
  display: flex;
  flex-direction: column;
  align-items: center;
  justify-content: space-around;
  width: 19px;
  height: 62px;
  border: 1px solid #b4b4b4;
  border-radius: 3px;
  background: #ececec;
`;

const Navigation = () => (
  <NavBar>
    <IconButton aria-label="Steering wheel" $h={16}>
      <svg width="14" height="14" viewBox="0 0 14 14" aria-hidden="true">
        <path d="M7 1h5v6a5.500 5.500 0 1 1-5-6z" fill="#eef1f4" stroke="#9aa3ad" strokeWidth="0.8" />
        <circle cx="7" cy="7" r="3" fill="#fff" stroke="#8d96a0" />
      </svg>
    </IconButton>
    <Icon name="caret" size={3} />
    <IconButton aria-label="Zoom region" $h={14}>
      <svg width="11" height="11" viewBox="0 0 11 11" aria-hidden="true">
        <path d="M1 1h6v6H1z" fill="#a9cfa4" stroke="#79a274" strokeWidth="0.8" />
        <circle cx="7" cy="7" r="2" fill="#eee" stroke="#666" strokeWidth="0.8" />
        <path d="M8.500 8.500l2 2" stroke="#666" />
      </svg>
    </IconButton>
    <Icon name="caret" size={3} />
  </NavBar>
);

const ViewScroll = styled(VScroll)`
  width: 11px;
  padding: 1px 0;
`;

const ViewControls = styled.div`
  display: flex;
  align-items: center;
  height: 9px;
  padding: 0 11px 0 14px;
  background: #f0f0f0;
`;

const ScaleText = styled.span`
  width: 27px;
  white-space: nowrap;
`;

const HTrack = styled.div`
  display: grid;
  grid-template-columns: 1fr 9px 1fr;
  align-items: center;
  flex: 1;
`;

const HThumb = styled.div`
  height: 8px;
  background: #c8c8c8;
`;

const End = styled.span`
  justify-self: end;
`;

const controls = ['detail', 'visual', 'sun', 'shadow', 'render', 'crop', 'cropShow', 'lock', 'glasses', 'smallBulb', 'worksharing', 'analytic', 'lock', 'constraint'];

const Drawing = () => (
  <DrawingArea>
    <DocTabs>
      <DocTab><Icon name="plan" size={9} /><span>Level 1</span></DocTab>
      <DocTab><Icon name="elevation" size={9} /><span>South</span></DocTab>
      <DocTab $active><Icon name="house" size={9} /><span>{'{3D}'}</span><Icon name="close" size={7} /></DocTab>
      <DocTab><Icon name="plan" size={9} /><span>Level 2</span></DocTab>
      <Spacer />
      <IconButton aria-label="Open views" $w={9} $h={10}><Icon name="customise" size={7} /></IconButton>
    </DocTabs>
    <ViewRow>
      <Viewport>
        <Model />
        <ModeBadge>Temporary Hide/Isolate</ModeBadge>
        <ViewCube />
        <Navigation />
      </Viewport>
      <ViewScroll>
        <Icon name="arrowUp" size={6} />
        <VThumb $h={9} $above="auto" />
        <Icon name="arrowDown" size={6} />
      </ViewScroll>
    </ViewRow>
    <ViewControls>
      <ScaleText>1 : 100</ScaleText>
      {controls.map((name, i) => (
        <IconButton key={i} aria-label={`${name} ${i + 1}`} $w={11} $h={9}><Icon name={name} size={9} /></IconButton>
      ))}
      <HTrack>
        <Icon name="arrowLeft" size={6} />
        <HThumb />
        <End><Icon name="arrowRight" size={6} /></End>
      </HTrack>
    </ViewControls>
  </DrawingArea>
);

// ---------- status bar ----------

const StatusBar = styled.footer`
  display: grid;
  grid-template-columns: 455px auto 1fr auto;
  align-items: center;
  height: 16px;
  padding: 0 43px 0 3px;
  border-bottom: 1px solid #5d6c72;
  white-space: nowrap;
`;

const Status = () => (
  <StatusBar>
    <span>Walls : Basic Wall : Generic - 400mm</span>
    <BarGroup>
      <IconButton aria-label="Worksets" $w={13}><Icon name="workset" size={9} /></IconButton>
      <Select label="Active workset" value="" width={106} height={11} bg="#f4f4f4" muted />
      <IconButton $gap={4}><Icon name="edit" size={9} />:0</IconButton>
      <IconButton aria-label="Design options" $w={10} $gap={11}><Icon name="option" size={9} /></IconButton>
      <IconButton aria-label="Add to set" $w={12} $gap={4} $muted><Icon name="optionB" size={9} /></IconButton>
      <Select label="Design option" value="Main Model" width={108} height={11} bg="#f4f4f4" muted />
    </BarGroup>
    <span />
    <BarGroup>
      {['selLink', 'selUnder', 'selPin', 'selFace', 'dragSel', 'gear'].map((name) => (
        <IconButton key={name} aria-label={name} $w={10} $gap={3}><Icon name={name} size={9} /></IconButton>
      ))}
      <IconButton $gap={2}><Icon name="filter" size={9} />:0</IconButton>
    </BarGroup>
  </StatusBar>
);

const App = () => (
  <Page>
    <GlobalStyle />
    <Header />
    <RibbonTabs />
    <RibbonBar />
    <OptionsBar />
    <Workspace>
      <Sidebar>
        <Properties />
        <Browser />
      </Sidebar>
      <Drawing />
    </Workspace>
    <Status />
  </Page>
);

export default App;
